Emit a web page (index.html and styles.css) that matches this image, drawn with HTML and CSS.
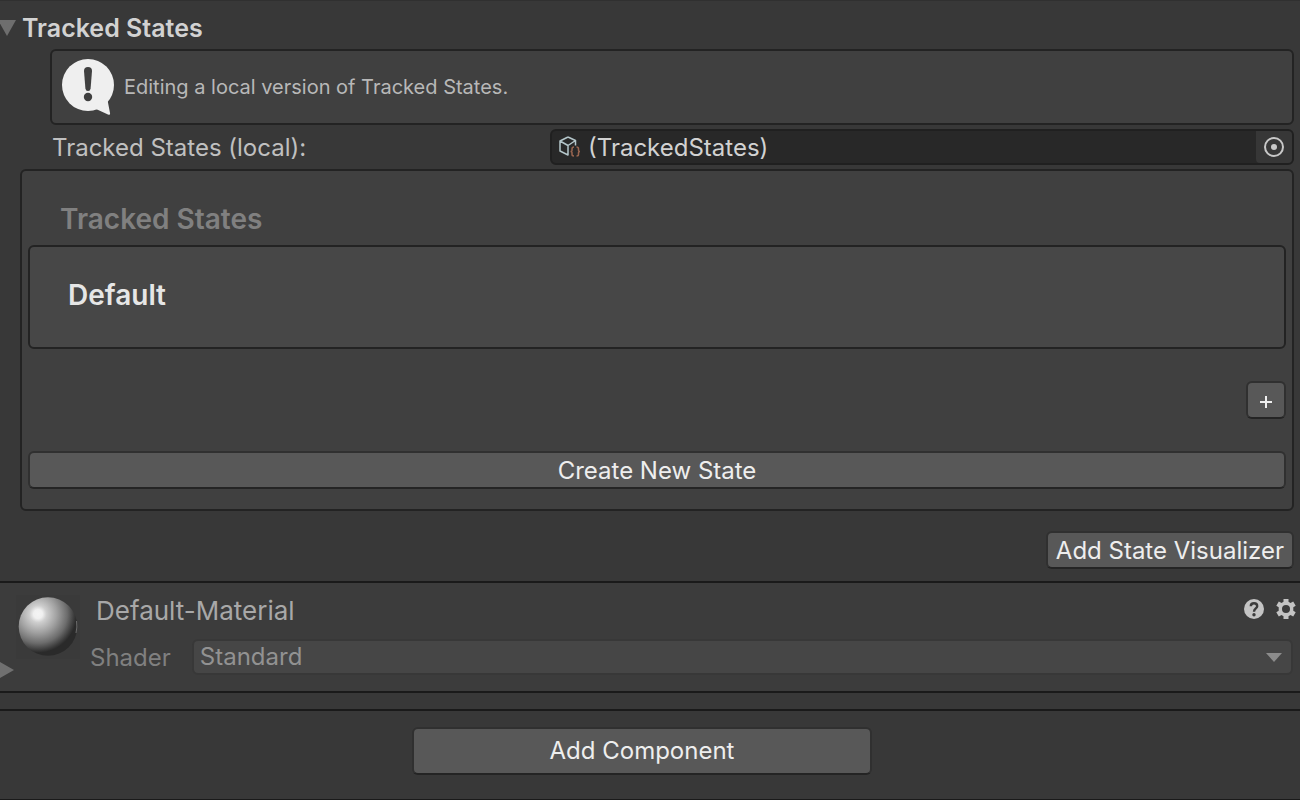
FILE: index.html
```html
<!DOCTYPE html>
<html lang="en">
<head>
<meta charset="utf-8">
<title>Inspector</title>
<link rel="stylesheet" href="styles.css">
</head>
<body>
<main class="inspector">
  <section class="component">
    <h2 class="foldout">
      <svg class="foldout-arrow" width="16" height="16" viewBox="0 0 16 16" aria-hidden="true"><path d="M-2 0H16L7 16Z" fill="#6e6e6e"/></svg>
      <span>Tracked States</span>
    </h2>
    <div class="help-box">
      <svg width="52" height="56" viewBox="0 0 52 56" aria-hidden="true">
        <circle cx="26" cy="26" r="26" fill="#efefef"/>
        <path d="M34 50L46 55.500Q48.500 56.500 48 54L45.500 41Z" fill="#efefef"/>
        <path d="M22 12Q22 8 26 8Q30 8 30 12L28.600 29.500Q28.300 32 26 32Q23.700 32 23.400 29.500Z" fill="#404040"/>
        <circle cx="26" cy="38" r="4.200" fill="#404040"/>
      </svg>
      <p class="help-text">Editing a local version of Tracked States.</p>
    </div>
    <div class="field-row">
      <label class="field-label" for="tracked">Tracked States (local):</label>
      <div class="object-field">
        <svg class="object-icon" width="24" height="22" viewBox="0 0 24 22" aria-hidden="true">
          <path d="M10 1L17.500 4.500V9.500M10 1L2 5V15L10 19V9.500M2 5L10 9.500L17.500 4.500" fill="none" stroke="#b4c6ca" stroke-width="1.500" stroke-linejoin="round"/>
          <path d="M16 11Q14 11 14 13V14.500Q14 15.500 12.500 15.500Q14 15.500 14 16.500V18.500Q14 20 16 20M18.500 11Q20.500 11 20.500 13V14.500Q20.500 15.500 22 15.500Q20.500 15.500 20.500 16.500V18.500Q20.500 20 18.500 20" fill="none" stroke="#9a6650" stroke-width="1.500"/>
        </svg>
        <input class="object-input" id="tracked" type="text" value="(TrackedStates)" readonly>
        <button class="picker" type="button" aria-label="Select object">
          <svg width="20" height="20" viewBox="0 0 20 20" aria-hidden="true"><circle cx="10" cy="10" r="9" fill="none" stroke="#c8c8c8" stroke-width="2"/><circle cx="10" cy="10" r="3" fill="#c8c8c8"/></svg>
        </button>
      </div>
    </div>
    <div class="panel">
      <h3 class="panel-title">Tracked States</h3>
      <div class="state">Default</div>
      <button class="button add-state" type="button" aria-label="Add">
        <svg width="12" height="12" viewBox="0 0 12 12" aria-hidden="true"><path d="M6 0V12M0 6H12" stroke="#eeeeee" stroke-width="2"/></svg>
      </button>
      <button class="button create" type="button">Create New State</button>
    </div>
    <button class="button visualizer" type="button">Add State Visualizer</button>
  </section>

  <section class="material">
    <div class="preview">
      <svg width="64" height="64" viewBox="0 0 64 64" aria-hidden="true">
        <defs>
          <radialGradient id="ball" gradientUnits="userSpaceOnUse" cx="22" cy="19" r="45">
            <stop offset="0" stop-color="#f4f4f4"/>
            <stop offset=".1" stop-color="#f0f0f0"/>
            <stop offset=".19" stop-color="#cecece"/>
            <stop offset=".42" stop-color="#a0a0a0"/>
            <stop offset=".65" stop-color="#6c6c6c"/>
            <stop offset=".8" stop-color="#3c3c3c"/>
            <stop offset=".86" stop-color="#2a2a2a"/>
            <stop offset="1" stop-color="#2a2a2a"/>
          </radialGradient>
        </defs>
        <rect width="64" height="64" fill="#3a3a3a"/>
        <circle cx="32" cy="31.500" r="29.300" fill="url(#ball)"/>
        <path d="M60.500 26Q61.500 32 60 38" fill="none" stroke="#6c6c6c"/>
      </svg>
      <svg class="expand" width="14" height="16" viewBox="0 0 14 16" aria-hidden="true"><path d="M0 0L14 8L0 16Z" fill="#707070"/></svg>
    </div>
    <div class="material-main">
      <div class="material-head">
        <h2 class="material-name">Default-Material</h2>
        <button class="icon-button" type="button" aria-label="Help">
          <svg width="20" height="20" viewBox="0 0 20 20" aria-hidden="true"><circle cx="10" cy="10" r="10" fill="#c4c4c4"/><path d="M6.800 7.200C6.800 3.200 13.200 3.200 13.200 7.200C13.200 9.500 10 9.500 10 12.700" fill="none" stroke="#3c3c3c" stroke-width="2.400"/><circle cx="10" cy="15.700" r="1.700" fill="#3c3c3c"/></svg>
        </button>
        <button class="icon-button" type="button" aria-label="Settings">
          <svg width="20" height="20" viewBox="0 0 20 20" aria-hidden="true"><path fill="#c4c4c4" fill-rule="evenodd" d="M7.500 0H12.500V2.800L14.500 4L17.200 2.400L19.700 6.700L17.300 8.200V11.800L19.700 13.300L17.200 17.600L14.500 16L12.500 17.200V20H7.500V17.200L5.500 16L2.800 17.600L.3 13.300L2.700 11.800V8.200L.3 6.700L2.800 2.400L5.500 4L7.500 2.800ZM10 6A4 4 0 1 0 10 14A4 4 0 1 0 10 6Z"/></svg>
        </button>
      </div>
      <div class="shader-row">
        <label class="shader-label" for="shader">Shader</label>
        <div class="select-wrap">
          <select class="select" id="shader"><option>Standard</option></select>
          <svg class="caret" width="16" height="9" viewBox="0 0 16 9" aria-hidden="true"><path d="M0 0H16L8 9Z" fill="#8c8c8c"/></svg>
        </div>
      </div>
    </div>
  </section>

  <div class="divider"></div>
  <footer class="footer">
    <button class="button add-component" type="button">Add Component</button>
  </footer>
</main>
</body>
</html>
```
FILE: styles.css
```css
* {
  box-sizing: border-box;
}

body {
  margin: 0;
  background: #383838;
  color: #c0c0c0;
  font-family: Inter, "Liberation Sans", sans-serif;
  font-size: 24px;
  font-weight: 400;
  line-height: 32px;
}

h2,
h3,
p {
  margin: 0;
  font-size: inherit;
  font-weight: inherit;
}

svg {
  display: block;
  flex: none;
}

button,
input,
select {
  margin: 0;
  padding: 0;
  border: 0;
  background: none;
  color: inherit;
  font: inherit;
}

.inspector {
  border-top: 1px solid #303030;
}

.component {
  display: flex;
  flex-direction: column;
  padding: 11px 6px 12px 20px;
}

.foldout {
  display: flex;
  align-items: center;
  gap: 6px;
  margin-left: -20px;
  color: #d2d2d2;
  font-size: 25px;
  font-weight: 600;
}

.help-box {
  display: flex;
  align-items: center;
  gap: 10px;
  height: 76px;
  margin: 5px 0 4px 30px;
  padding: 0 10px;
  border: 2px solid #232323;
  border-radius: 6px;
  background: #404040;
}

.help-text {
  color: #b8b8b8;
  font-size: 20px;
}

.field-row {
  display: grid;
  grid-template-columns: 2fr 3fr;
  column-gap: 2px;
  align-items: center;
  margin-bottom: 4px;
  padding-left: 32px;
}

.field-label {
  padding-top: 2px;
}

.object-field {
  display: flex;
  align-items: center;
  height: 36px;
  border: 2px solid #202020;
  border-radius: 6px;
  background: #282828;
}

.object-icon {
  margin: 0 6px;
}

.object-input {
  flex: 1;
  min-width: 0;
  padding-top: 2px;
  color: #d2d2d2;
  outline: 0;
}

.picker {
  display: grid;
  place-items: center;
  width: 36px;
  height: 32px;
  border-radius: 0 4px 4px 4px;
  background: #373737;
}

.panel {
  display: flex;
  flex-direction: column;
  padding: 32px 6px 20px;
  border: 2px solid #232323;
  border-radius: 6px;
  background: #404040;
}

.panel-title {
  margin-bottom: 10px;
  padding-left: 32px;
  color: #808080;
  font-size: 28px;
  font-weight: 600;
}

.state {
  height: 104px;
  padding: 32px 38px;
  border: 2px solid #232323;
  border-radius: 6px;
  background: #474747;
  color: #e6e6e6;
  font-size: 28px;
  font-weight: 600;
}

.button {
  height: 38px;
  padding-top: 2px;
  border: 2px solid #303030;
  border-bottom-color: #242424;
  border-radius: 6px;
  background: #585858;
  color: #eeeeee;
}

.add-state {
  display: grid;
  place-items: center;
  align-self: flex-end;
  width: 40px;
  margin: 32px 0;
  padding-top: 4px;
}

.visualizer {
  align-self: flex-end;
  margin-top: 20px;
  padding: 2px 8px 0;
}

.material {
  display: flex;
  gap: 10px;
  height: 112px;
  padding: 12px 4px 0 0;
  border: solid #1a1a1a;
  border-width: 2px 0;
  background: #3c3c3c;
}

.preview {
  padding-left: 16px;
}

.expand {
  margin: 3px 0 0 -16px;
}

.material-main {
  flex: 1;
}

.material-head {
  display: flex;
  align-items: center;
  gap: 12px;
  padding-left: 6px;
}

.material-name {
  flex: 1;
  color: #a8a8a8;
  font-size: 26px;
}

.icon-button {
  width: 20px;
  height: 24px;
  padding-bottom: 4px;
}

.shader-row {
  display: flex;
  align-items: center;
  gap: 21px;
  margin-top: 12px;
  padding-right: 3px;
}

.shader-label {
  padding-top: 2px;
  color: #808080;
}

.select-wrap {
  position: relative;
  flex: 1;
  height: 36px;
}

.select {
  width: 100%;
  height: 100%;
  padding-left: 6px;
  border: 2px solid #383838;
  border-radius: 6px;
  background: #464646;
  color: #929292;
  appearance: none;
}

.caret {
  position: absolute;
  top: 14px;
  right: 11px;
  pointer-events: none;
}

.divider {
  height: 16px;
}

.footer {
  display: flex;
  justify-content: center;
  padding: 16px 16px 24px 0;
  border: solid #1a1a1a;
  border-width: 2px 0 1px;
}

.add-component {
  width: 460px;
  max-width: 100%;
  height: 48px;
  padding-top: 0;
}
```
